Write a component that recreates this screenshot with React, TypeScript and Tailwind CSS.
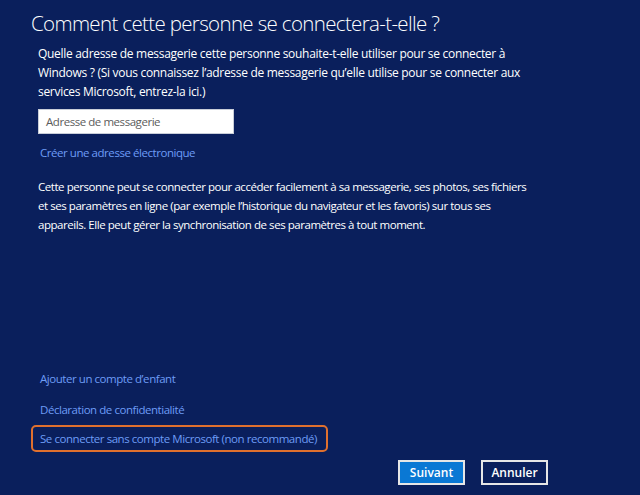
import React from 'react';

const font = { fontFamily: '"Segoe UI", "Open Sans", "Noto Sans", sans-serif' };

const App = () => {
  return (
    <div className="w-[640px] h-[495px] bg-[#0a1f5c] text-white flex flex-col overflow-hidden" style={font}>
      {/* Header */}
      <h1 className="ml-[31px] mt-[8px] text-[20.5px] font-light leading-[30px] tracking-[-0.65px] whitespace-nowrap">
        Comment cette personne se connectera-t-elle ?
      </h1>

      <p className="ml-[38px] mt-[6px] text-[12px] leading-[19px] tracking-[-0.3px] whitespace-nowrap">
        Quelle adresse de messagerie cette personne souhaite-t-elle utiliser pour se connecter à
        <br />
        Windows ? (Si vous connaissez l’adresse de messagerie qu’elle utilise pour se connecter aux
        <br />
        services Microsoft, entrez-la ici.)
      </p>

      <div className="ml-[38px] mt-[8px] w-[196px] h-[25px] bg-white border border-[#c8cdd8] flex items-center px-[7px]">
        <span className="text-[11.5px] tracking-[-0.45px] text-[#5c5c5c]">Adresse de messagerie</span>
      </div>

      <div className="ml-[40px] mt-[9px] text-[11.5px] leading-[19px] tracking-[-0.45px] text-[#6d9cf6]">
        Créer une adresse électronique
      </div>

      <p className="ml-[38px] mt-[15px] text-[11.5px] leading-[19px] tracking-[-0.45px] whitespace-nowrap">
        Cette personne peut se connecter pour accéder facilement à sa messagerie, ses photos, ses fichiers
        <br />
        et ses paramètres en ligne (par exemple l’historique du navigateur et les favoris) sur tous ses
        <br />
        appareils. Elle peut gérer la synchronisation de ses paramètres à tout moment.
      </p>

      <div className="flex-1" />

      {/* Bottom links */}
      <div className="flex flex-col text-[11.5px] leading-[19px] tracking-[-0.45px] text-[#6d9cf6] whitespace-nowrap">
        <div className="ml-[40px]">Ajouter un compte d’enfant</div>
        <div className="ml-[40px] mt-[12px]">Déclaration de confidentialité</div>
        <div className="ml-[31px] mt-[6px] w-[297px] h-[27px] border-2 border-[#e0702e] rounded-[5px] flex items-center pl-[7px]">
          <span>Se connecter sans compte Microsoft (non recommandé)</span>
        </div>
      </div>

      {/* Buttons */}
      <div className="flex justify-end gap-[16px] pr-[92px] mt-[8px] mb-[10px]">
        <button className="w-[67px] h-[25px] bg-[#0a78d4] border-2 border-[#e6e6e6] text-[12px] font-semibold text-white">
          Suivant
        </button>
        <button className="w-[67px] h-[25px] bg-[#0a1f5c] border-2 border-[#e6e6e6] text-[12px] font-semibold text-white">
          Annuler
        </button>
      </div>
    </div>
  );
};

export default App;
